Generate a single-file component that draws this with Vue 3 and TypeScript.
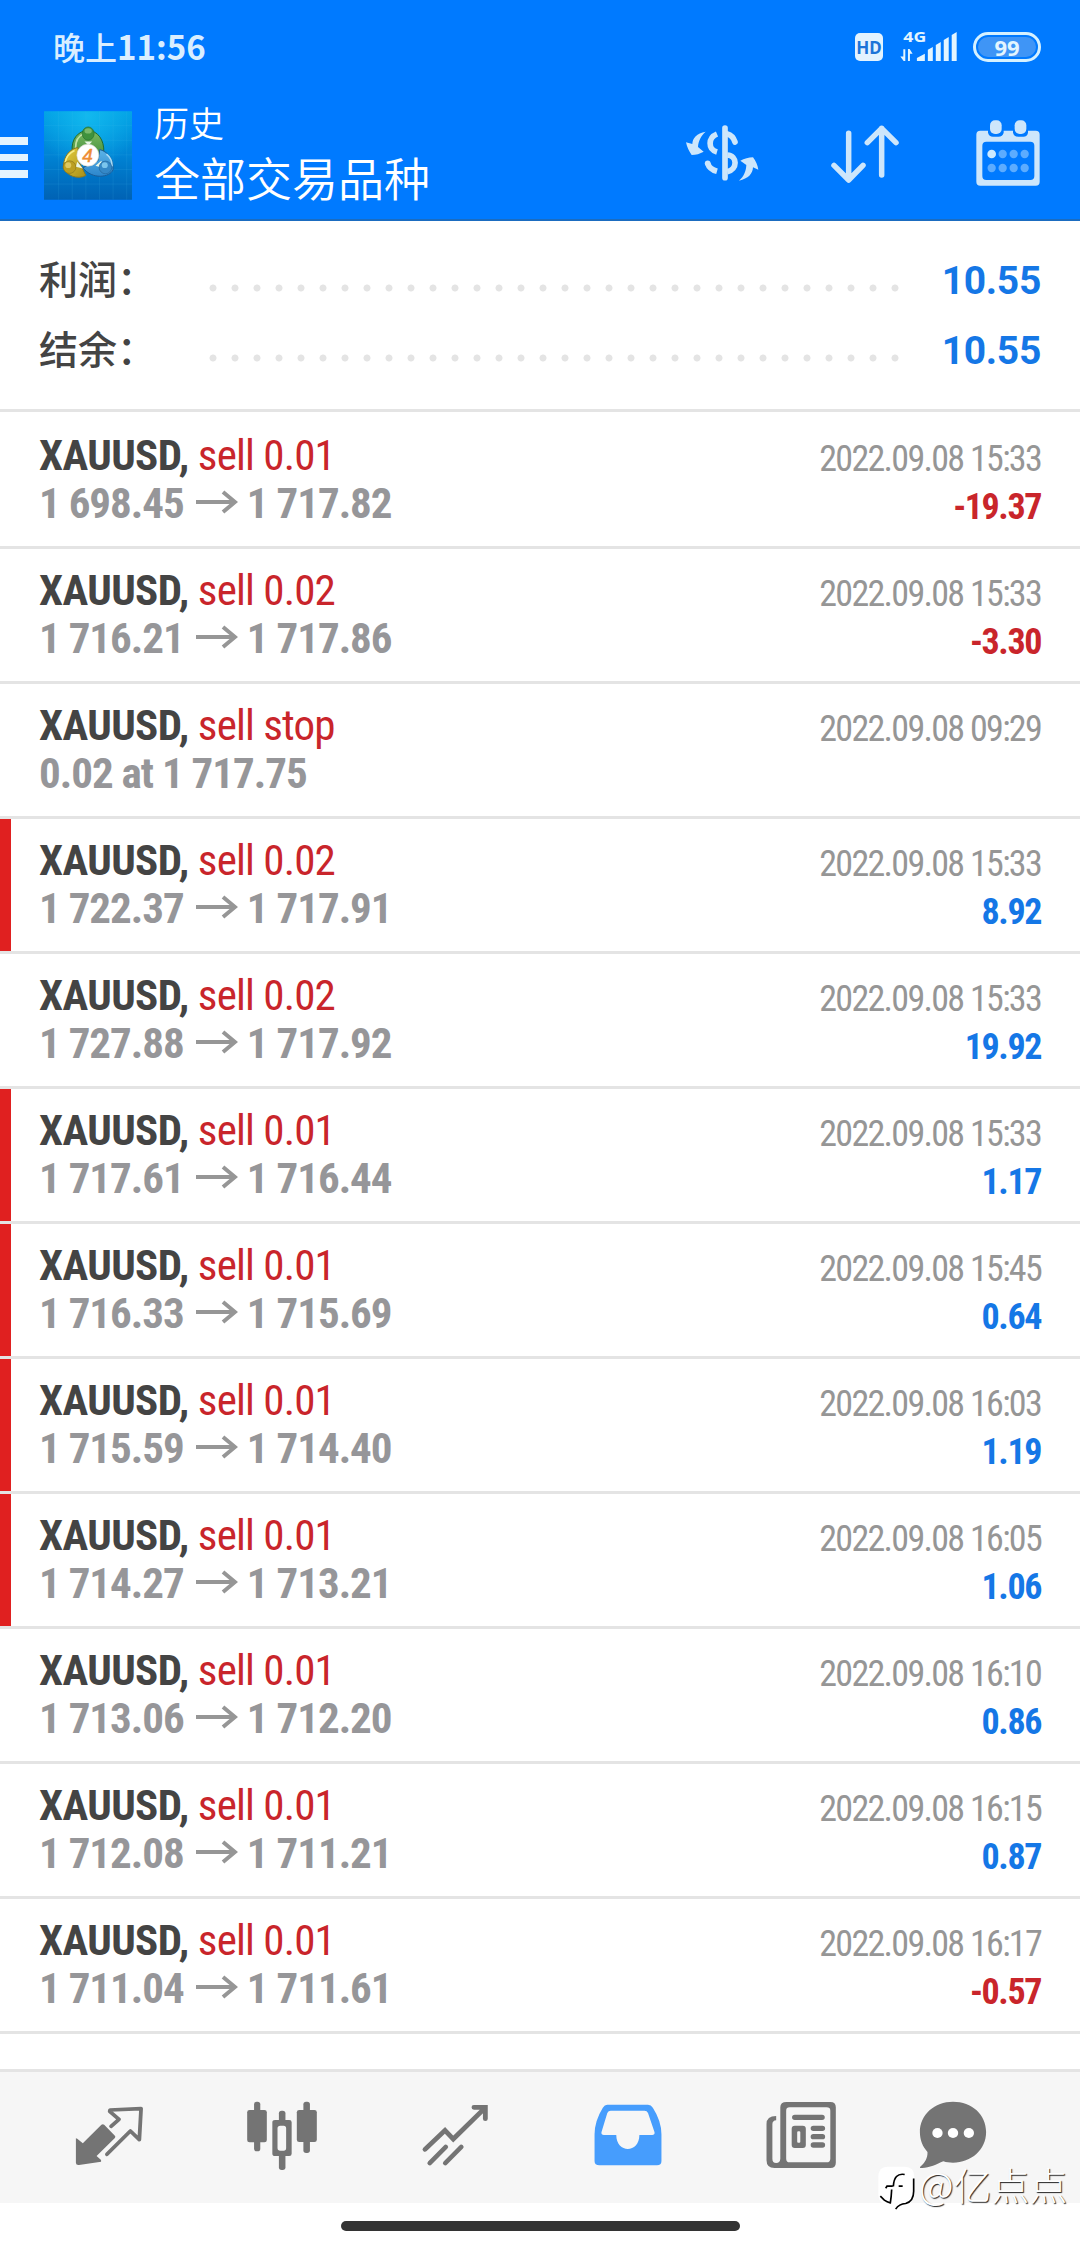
<script setup lang="ts">
interface Deal {
  action: string
  from: string
  to?: string
  time: string
  profit?: string
  marked?: boolean
}

const totals = [
  { label: '利润：', value: '10.55' },
  { label: '结余：', value: '10.55' },
]

const deals: Deal[] = [
  { action: 'sell 0.01', from: '1 698.45', to: '1 717.82', time: '2022.09.08 15:33', profit: '-19.37' },
  { action: 'sell 0.02', from: '1 716.21', to: '1 717.86', time: '2022.09.08 15:33', profit: '-3.30' },
  { action: 'sell stop', from: '0.02 at 1 717.75', time: '2022.09.08 09:29' },
  { action: 'sell 0.02', from: '1 722.37', to: '1 717.91', time: '2022.09.08 15:33', profit: '8.92', marked: true },
  { action: 'sell 0.02', from: '1 727.88', to: '1 717.92', time: '2022.09.08 15:33', profit: '19.92' },
  { action: 'sell 0.01', from: '1 717.61', to: '1 716.44', time: '2022.09.08 15:33', profit: '1.17', marked: true },
  { action: 'sell 0.01', from: '1 716.33', to: '1 715.69', time: '2022.09.08 15:45', profit: '0.64', marked: true },
  { action: 'sell 0.01', from: '1 715.59', to: '1 714.40', time: '2022.09.08 16:03', profit: '1.19', marked: true },
  { action: 'sell 0.01', from: '1 714.27', to: '1 713.21', time: '2022.09.08 16:05', profit: '1.06', marked: true },
  { action: 'sell 0.01', from: '1 713.06', to: '1 712.20', time: '2022.09.08 16:10', profit: '0.86' },
  { action: 'sell 0.01', from: '1 712.08', to: '1 711.21', time: '2022.09.08 16:15', profit: '0.87' },
  { action: 'sell 0.01', from: '1 711.04', to: '1 711.61', time: '2022.09.08 16:17', profit: '-0.57' },
]
</script>

<template>
  <div class="screen">
    <header class="top">
      <div class="status">
        <span class="clock">晚上<b>11:56</b></span>
        <span class="hd">HD</span>
        <svg class="signal" viewBox="780 69 175 144">
          <text x="790" y="125" font-size="44" font-weight="700" textLength="69" lengthAdjust="spacingAndGlyphs">4G</text>
          <path d="M790 148h6v35h-5l-10-13h9zM804 183v-36h5l9 14h-8v22z" />
          <path d="M831 183v-9l24-13v22zM864 183v-34l15-8v42zM888 183v-48l15-9v57zM912 183v-63l15-9v72zM936 183v-78l15-9v87z" />
        </svg>
        <span class="battery"><span class="level">99</span></span>
      </div>
      <div class="bar">
        <div class="menu"><i></i><i></i><i></i></div>
        <svg class="logo" viewBox="132 332 265 266">
          <defs>
            <linearGradient id="sky" x1="0" y1="0" x2="0" y2="1">
              <stop offset="0" stop-color="#00a0e4" />
              <stop offset=".5" stop-color="#0083d4" />
              <stop offset="1" stop-color="#0062b4" />
            </linearGradient>
            <radialGradient id="glow" cx=".5" cy=".05" r=".6">
              <stop offset="0" stop-color="#12b8ee" />
              <stop offset="1" stop-color="#12b8ee" stop-opacity="0" />
            </radialGradient>
            <linearGradient id="gold" x1="0" y1="0" x2="1" y2="1">
              <stop offset="0" stop-color="#e6d040" />
              <stop offset="1" stop-color="#a88e18" />
            </linearGradient>
            <linearGradient id="leaf" x1="0" y1="0" x2="0" y2="1">
              <stop offset="0" stop-color="#7cba60" />
              <stop offset="1" stop-color="#3d8c3c" />
            </linearGradient>
            <linearGradient id="sea" x1="0" y1="0" x2="0" y2="1">
              <stop offset="0" stop-color="#5cb4e8" />
              <stop offset="1" stop-color="#2c86cc" />
            </linearGradient>
          </defs>
          <path fill="url(#sky)" d="M132 332h265v266h-265z" />
          <path fill="url(#glow)" d="M132 332h265v266h-265z" />
          <path d="M176 332v266M217 332v266M258 332v266M299 332v266M340 332v266M381 332v266M132 375h265M132 419h265M132 463h265M132 507h265M132 551h265" stroke="#4fc0ee" stroke-opacity=".2" stroke-width="2" />
          <path d="M217 452c-4-34 17-62 47-62s50 28 48 66l-14 20-66-22z" fill="url(#leaf)" stroke="#1f6830" stroke-width="3" />
          <path d="M227 443c0-22 10-38 24-43" fill="none" stroke="#c2e2a4" stroke-width="5" />
          <path d="M300 447c28 8 42 33 40 61-10 23-62 31-91-6l46-22z" fill="url(#sea)" stroke="#1b5d98" stroke-width="3" />
          <path d="M320 461c12 9 17 21 17 36" fill="none" stroke="#a8daf4" stroke-width="5" />
          <path d="M234 441c-24 4-42 24-44 59 8 25 42 39 68 25l-20-40z" fill="url(#gold)" stroke="#8a7720" stroke-width="3" />
          <path d="M224 450c-15 7-25 18-28 35" fill="none" stroke="#f6ec86" stroke-width="5" />
          <path d="M232 484l-4 15 21 5zM287 496l18-15 4 22z" fill="#e9f7e8" />
          <path d="M254 423h23l-11 12z" fill="#e9f7e8" />
          <ellipse cx="265" cy="399" rx="18" ry="20" fill="#3f923d" stroke="#28702e" stroke-width="2" />
          <ellipse cx="265" cy="391" rx="11" ry="8" fill="#7ab86c" />
          <circle cx="209" cy="500" r="19" fill="#bb9f22" stroke="#8b761d" stroke-width="2" />
          <circle cx="205" cy="494" r="9" fill="#dcc860" />
          <circle cx="317" cy="501" r="19" fill="#3488c7" stroke="#22659c" stroke-width="2" />
          <circle cx="315" cy="494" r="9" fill="#7bc5ed" />
          <circle cx="264" cy="464" r="33" fill="#fff" stroke="#d8d8d0" stroke-width="2" />
          <text x="263" y="484" text-anchor="middle" font-size="57" font-style="italic" fill="#ee8c33" stroke="#ee8c33" stroke-width="1.500">4</text>
        </svg>
        <div class="titles">
          <div class="t1">历史</div>
          <div class="t2">全部交易品种</div>
        </div>
        <div class="tools">
          <svg viewBox="66 40 240 240">
            <g fill="none" stroke="#cde6fb" stroke-width="17">
              <path d="M195 85v149" stroke-linecap="round" />
              <path d="M171 103c-27 11-28 46 0 54" />
              <path d="M202 103c12 3 19 12 23 24" stroke-linecap="round" />
              <path d="M143 191c4 13 14 20 28 24" />
              <path d="M202 166c31 2 31 44 0 50" />
            </g>
            <circle cx="143" cy="191" r="8.500" fill="#cde6fb" />
            <path d="M137 96c-27 5-39 19-40 37l-19-5c3 14 9 27 17 38 13 0 25-4 36-10l-17-14c1-18 9-34 23-46zM237 243c28-6 41-20 42-40l16 7c-2-14-8-27-16-37-13 0-26 4-38 10l18 13c-1 20-8 35-22 47z" fill="#cde6fb" />
          </svg>
          <svg viewBox="495 40 240 240">
            <path d="M566 101v139M522 197l44 44 43-44M665 226V86M622 129l43-43 43 43" fill="none" stroke="#cde6fb" stroke-width="16.500" stroke-linecap="round" stroke-linejoin="round" />
          </svg>
          <svg viewBox="925 40 240 240">
            <path fill-rule="evenodd" fill="#cde6fb" d="M962 93h23v6q3 12 15 12h16q13 0 16-12v-6h28v6q3 12 15 12h16q12 0 14-12v-6h23q12 0 12 12v141q0 12-12 12H962q-12 0-12-12V105q0-12 12-12zM980 126q-12 0-12 12v91q0 12 12 12h132q12 0 12-12v-91q0-12-12-12z" />
            <rect x="991" y="62" width="35" height="41" rx="15" fill="#cde6fb" />
            <rect x="1065" y="62" width="35" height="41" rx="15" fill="#cde6fb" />
            <circle cx="996" cy="163" r="13" fill="#cdeaff" />
            <g fill="#5cacff">
              <circle cx="1029" cy="163" r="12.500" /><circle cx="1062" cy="163" r="12.500" /><circle cx="1095" cy="163" r="12.500" />
              <circle cx="996" cy="205" r="12.500" /><circle cx="1029" cy="205" r="12.500" /><circle cx="1062" cy="205" r="12.500" /><circle cx="1095" cy="205" r="12.500" />
            </g>
          </svg>
        </div>
      </div>
    </header>

    <section class="totals">
      <div v-for="t in totals" :key="t.label" class="total">
        <span class="label">{{ t.label }}</span>
        <span class="dots"></span>
        <span class="sum">{{ t.value }}</span>
      </div>
    </section>

    <main class="deals">
      <article v-for="(d, i) in deals" :key="i" class="deal" :class="{ marked: d.marked }">
        <div class="left">
          <div class="name"><b>XAUUSD,</b> <span>{{ d.action }}</span></div>
          <div class="prices">
            <span>{{ d.from }}</span>
            <template v-if="d.to">
              <svg class="arrow" viewBox="0 0 42 24"><path d="M0 12h39M27 2l12 10-12 10" fill="none" stroke="#969696" stroke-width="4" /></svg>
              <span>{{ d.to }}</span>
            </template>
          </div>
        </div>
        <div class="right">
          <div class="time">{{ d.time }}</div>
          <div v-if="d.profit" class="profit" :class="{ loss: d.profit.startsWith('-') }">{{ d.profit }}</div>
        </div>
      </article>
    </main>

    <nav class="tabs">
      <svg viewBox="199 165 232 240" preserveAspectRatio="none">
        <path d="M219 295l4 1 16 14 54-56q4-3 8 0l31 33q3 3 0 7l-53 54 13 12v5l-64 10q-9 1-9-7z" fill="#747474" />
        <path d="M321 259l23-21-27-24 1-4 90-4-5 93-26-26-68 70" fill="none" stroke="#747474" stroke-width="11" stroke-linejoin="round" stroke-linecap="round" />
      </svg>
      <svg viewBox="700 165 232 240" preserveAspectRatio="none" fill="#747474">
        <rect x="735" y="185" width="18" height="149" rx="8" /><rect x="715" y="210" width="57" height="97" rx="7" />
        <rect x="878" y="185" width="19" height="154" rx="8" /><rect x="859" y="210" width="58" height="96" rx="7" />
        <rect x="807" y="212" width="19" height="40" rx="8" /><rect x="807" y="335" width="19" height="55" rx="8" />
        <path fill-rule="evenodd" d="M796 240h41q7 0 7 7v94q0 7-7 7h-41q-8 0-8-7v-94q0-7 8-7zM811 257q-8 0-8 8v59q0 8 8 8h10q7 0 7-8v-59q0-8-7-8z" />
      </svg>
      <svg viewBox="1202 165 232 240" preserveAspectRatio="none">
        <path d="M1231 328l58-57 24 26 90-91M1373 202h33v34M1245 369l46-48M1290 369l46-48" fill="none" stroke="#747474" stroke-width="14" stroke-linecap="round" stroke-linejoin="miter" />
      </svg>
      <svg viewBox="138 165 232 240" preserveAspectRatio="none">
        <path fill-rule="evenodd" fill="#469dfd" d="M194 194h118q9 0 14 9 25 40 25 80v80q0 13-13 13H171q-14 0-14-13v-80q0-40 24-80 5-9 13-9zM204 212q-7 0-10 7l-17 58q-1 8 7 8h36c0 56 67 56 67 0h37q8 0 7-8l-19-58q-3-7-10-7z" />
      </svg>
      <svg viewBox="641 165 232 240" preserveAspectRatio="none">
        <path fill-rule="evenodd" fill="#747474" d="M715 186h127q16 0 16 16v166q0 16-16 16H680q-23 0-23-23V252q0-24 28-24v13q-11 1-11 12v103q0 13 11 13t12-13V202q0-16 18-16zM724 202q-10 0-10 10v144q0 11 10 11h107q11 0 11-11V212q0-10-11-10z" />
        <path d="M739 232h79M793 265h26M793 290h26M793 315h26" stroke="#747474" stroke-width="16" stroke-linecap="round" />
        <path fill-rule="evenodd" fill="#747474" d="M739 257h23q9 0 9 9v49q0 9-9 9h-23q-9 0-9-9v-49q0-9 9-9zM749 274q-3 0-3 3v28q0 3 3 3h3q3 0 3-3v-28q0-3-3-3z" />
      </svg>
      <svg viewBox="1083 165 232 240" preserveAspectRatio="none">
        <path fill="#747474" d="M1199 185c55 0 96 38 96 91s-43 92-96 92c-11 0-19-1-28-4-20 9-42 21-64 20q-6 0-3-4c13-11 22-26 21-44-14-17-22-35-22-60 0-53 43-91 96-91z" />
        <circle cx="1154" cy="279" r="15" fill="#fff" /><circle cx="1199" cy="279" r="15" fill="#fff" /><circle cx="1245" cy="279" r="15" fill="#fff" />
      </svg>
    </nav>
    <div class="gesture"><span></span></div>

    <div class="watermark">
      <svg viewBox="50 80 120 140">
        <path d="M84 85h52q29 0 29 30v38q0 30-29 43-16 4-26 16-1-10-3-14H88q-31 0-31-32v-50q0-31 27-31z" fill="#fff" />
        <path d="M136 108q-32-6-34 36M79 149l4-6h17M118 143h12M97 153q-1 22-4 40-10-2-18-8l-12-12M163 120v38q0 30-24 37-20 1-30 17" fill="none" stroke="#000" stroke-width="5" />
      </svg>
      <span>@亿点点</span>
    </div>
  </div>
</template>

<style>
body {
  background: #fff;
}
</style>

<style scoped>
.screen {
  position: relative;
  width: 1080px;
  height: 2248px;
  overflow: hidden;
  display: flex;
  flex-direction: column;
  background: #fff;
  font-family: Roboto, "Noto Sans CJK SC", sans-serif;
}
svg {
  display: block;
  flex: none;
}
.top {
  height: 221px;
  box-sizing: border-box;
  background: #007aff;
  border-bottom: 2px solid #1b6cc0;
  color: #fff;
}
.status {
  height: 94px;
  box-sizing: border-box;
  padding: 0 39px 0 53px;
  display: flex;
  align-items: center;
}
.clock {
  margin-top: -2px;
  font: 500 32px/40px "Noto Sans CJK SC", sans-serif;
  color: #d9eeff;
  white-space: nowrap;
}
.clock b {
  font-size: 33px;
  font-weight: 700;
  line-height: 40px;
}
.hd {
  width: 28px;
  height: 28px;
  margin-left: auto;
  border-radius: 5px;
  background: #e3f3ff;
  color: #1c74d8;
  font: 700 17px/29px "Noto Sans", sans-serif;
  text-align: center;
}
.signal {
  width: 58px;
  height: 48px;
  margin: 0 15px 0 17px;
  fill: #e3f5ff;
  font-family: "Noto Sans", sans-serif;
}
.battery {
  box-sizing: border-box;
  width: 68px;
  height: 30px;
  padding: 2px;
  border: 3px solid #d5f1ff;
  border-radius: 15px;
}
.level {
  display: block;
  height: 20px;
  border-radius: 10px;
  background: #3f95f6;
  color: #e3f5ff;
  font: 700 22px/20px "Noto Sans", sans-serif;
  text-align: center;
}
.bar {
  height: 125px;
  display: flex;
}
.menu {
  width: 28px;
  padding-top: 43px;
  display: flex;
  flex-direction: column;
  gap: 9px;
}
.menu i {
  height: 7.500px;
  background: #e4f4ff;
}
.logo {
  width: 88px;
  height: 89px;
  margin: 16.500px 0 0 16px;
  font-family: "Liberation Sans", sans-serif;
}
.titles {
  margin-left: 22px;
  font-family: "Noto Sans CJK SC", sans-serif;
  font-weight: 350;
  white-space: nowrap;
}
.t1 {
  padding-top: 7px;
  font-size: 35px;
  line-height: 42px;
}
.t2 {
  font-size: 46px;
  line-height: 66px;
}
.tools {
  margin: 19px 32px 0 auto;
  display: flex;
  gap: 63px;
}
.tools svg {
  width: 80px;
  height: 80px;
}
.totals {
  padding: 24px 39px 0 39px;
  height: 164px;
  border-bottom: 3px solid #e4e4e4;
}
.total {
  height: 70px;
  display: flex;
  align-items: flex-start;
}
.label {
  width: 171px;
  margin-top: -3px;
  font: 500 39px/70px "Noto Sans CJK SC", sans-serif;
  color: #444;
}
.dots {
  width: 704px;
  height: 8px;
  margin: 38.500px 0 0 -8px;
  background: radial-gradient(circle, #e4e4e4 3.100px, transparent 3.900px) 0 0 / 22px 8px repeat-x;
}
.sum {
  margin-left: auto;
  margin-top: 1px;
  font-size: 39px;
  font-weight: 700;
  letter-spacing: -0.3px;
  line-height: 70px;
  color: #1577e6;
}
.deals {
  padding-top: 2px;
}
.deal {
  height: 135px;
  box-sizing: border-box;
  padding: 17.400px 38px 0 28px;
  border-bottom: 3px solid #e4e4e4;
  display: flex;
  justify-content: space-between;
}
.deal::before {
  content: "";
  width: 11px;
  height: 132px;
  margin: -17.400px 0 0 -28px;
  flex: none;
}
.deal.marked::before {
  background: #e02020;
}
.left {
  margin-left: 28px;
  flex: 1;
  font-stretch: 75%;
  font-size: 43px;
  line-height: 48px;
  white-space: nowrap;
}
.name {
  letter-spacing: -0.8px;
}
.name b {
  font-weight: 700;
  letter-spacing: -0.6px;
  color: #444;
}
.name span {
  color: #c9252b;
}
.prices {
  display: flex;
  font-weight: 700;
  letter-spacing: -1px;
  color: #969699;
}
.arrow {
  width: 42px;
  height: 24px;
  margin: 11px 9px 0 12px;
}
.right {
  padding: 3.200px 1px 0 0;
  font-size: 36px;
  line-height: 48px;
  font-stretch: 75%;
  text-align: right;
  white-space: nowrap;
}
.time {
  letter-spacing: -1.700px;
  color: #969696;
}
.profit {
  font-weight: 700;
  letter-spacing: -1.400px;
  color: #1577e6;
}
.profit.loss {
  color: #c9252b;
}
.tabs {
  margin-top: auto;
  height: 134px;
  box-sizing: border-box;
  flex: none;
  padding: 23px 0 0 22px;
  border-top: 3px solid #e4e4e4;
  background: #f6f6f6;
  display: grid;
  grid-template-columns: repeat(5, 173.200px) 130px;
  justify-items: center;
}
.tabs svg {
  width: 80px;
  height: 80px;
}
.gesture {
  height: 45px;
  flex: none;
  display: flex;
  justify-content: center;
  padding-top: 18px;
  box-sizing: border-box;
}
.gesture span {
  width: 399px;
  height: 10px;
  border-radius: 5px;
  background: #333;
}
.watermark {
  position: absolute;
  left: 876px;
  top: 2160px;
  display: flex;
  align-items: flex-start;
  font: 300 38px/48px "Noto Sans CJK SC", sans-serif;
  color: #fff;
  text-shadow: 1px 1px 1px #222;
  white-space: nowrap;
}
.watermark svg {
  width: 40px;
  height: 47px;
  margin: 5px 3px 0 0;
}
</style>
